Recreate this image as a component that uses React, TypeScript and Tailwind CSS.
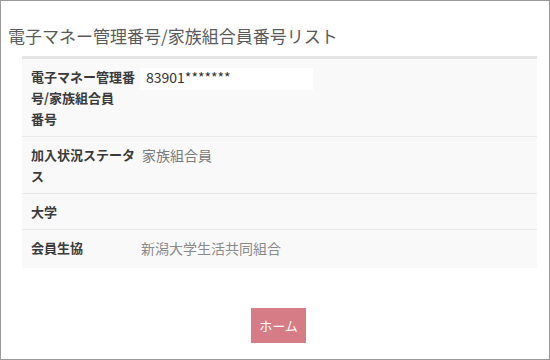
import React from 'react';

interface Row {
  label: React.ReactNode;
  value?: React.ReactNode;
}

const rows: Row[] = [
  {
    label: (
      <>
        電子マネー管理番
        <br />
        号/家族組合員
        <br />
        番号
      </>
    ),
    value: (
      <div className="mt-[2px] w-[173px] h-[22px] bg-white pl-[6px] text-[14px] leading-[19px] text-[#333]">
        83901*******
      </div>
    ),
  },
  {
    label: (
      <>
        加入状況ステータ
        <br />
        ス
      </>
    ),
    value: <span className="pl-[2px] text-[14px] text-[#7a7a7a]">家族組合員</span>,
  },
  { label: '大学' },
  {
    label: '会員生協',
    value: <span className="pl-[1px] text-[14px] text-[#8a8a8a]">新潟大学生活共同組合</span>,
  },
];

const App: React.FC = () => {
  return (
    <div
      className="w-[550px] h-[360px] bg-white border border-[#9a9a9a] flex flex-col"
      style={{ fontFamily: '"Noto Sans CJK JP", "Noto Sans", sans-serif' }}
    >
      <h1 className="pl-[7px] pt-[21px] text-[17px] leading-[27px] text-[#5a5a5a] font-normal">
        電子マネー管理番号/家族組合員番号リスト
      </h1>

      <div className="ml-[21px] mr-[12px] mt-[7px] bg-[#f9f9f9] border-t-[3px] border-[#e4e4e4]">
        {rows.map((row, i) => (
          <div
            key={i}
            className={`flex items-start pl-[9px] py-[7px] ${i > 0 ? 'border-t border-[#e9e9e9]' : ''}`}
          >
            <div className="w-[109px] shrink-0 text-[13px] leading-[21px] font-bold text-[#3a3a3a]">
              {row.label}
            </div>
            <div className="leading-[21px]">{row.value}</div>
          </div>
        ))}
        <div className="h-[2px]" />
      </div>

      <div className="flex justify-center mt-[40px]">
        <button className="w-[55px] h-[35px] ml-[7px] bg-[#d67c86] text-white text-[13px] leading-[35px]">
          ホーム
        </button>
      </div>
    </div>
  );
};

export default App;
